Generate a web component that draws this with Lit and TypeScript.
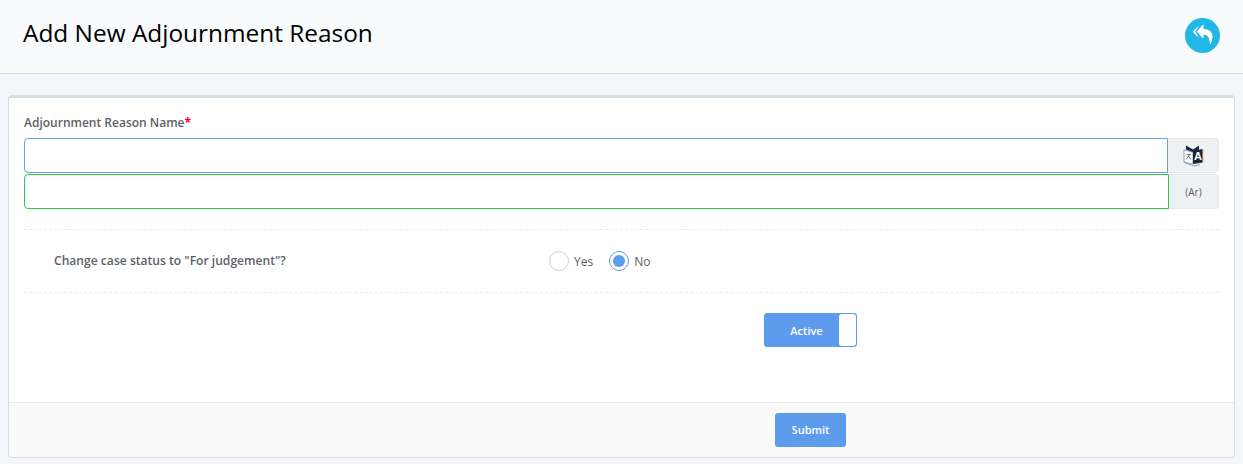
import { LitElement, html, css } from "lit";
import { customElement } from "lit/decorators.js";

@customElement("app-root")
export class AppRoot extends LitElement {
  static styles = css`
    :host { display: block; width: 1243px; height: 464px; background: #f4f6fb; font-family: "Open Sans", "Noto Sans", sans-serif; overflow: hidden; }
    .head { height: 73px; box-sizing: content-box; background: #f9fafc; border-bottom: 1px solid #d3d8de; display: flex; align-items: center; justify-content: space-between; padding: 0 23px; }
    h1 { margin: 0; font-size: 24.4px; font-weight: 400; color: #000; position: relative; top: -4px; line-height: 32px; }
    .back { width: 35px; height: 35px; border-radius: 50%; background: #22b8e6; display: flex; align-items: center; justify-content: center; margin-top: -3px; }
    .card { margin: 21px 8px 0 8px; height: 363px; box-sizing: border-box; background: #fff; border: 1px solid #d5dde4; border-top: 3px solid #d2dde5; border-radius: 4px; display: flex; flex-direction: column; }
    .body { flex: 1; padding: 15px 15px 0 15px; }
    label.title { display: block; font-size: 12px; font-weight: 600; color: #5f5f66; line-height: 20px; margin-bottom: 5px; }
    .star { color: #f0002a; font-weight: 700; }
    .grp { display: flex; height: 35px; }
    .grp + .grp { margin-top: 1px; }
    .inp { flex: 1; box-sizing: border-box; border: 1px solid #6b9fe8; border-radius: 4px 0 0 4px; background: #fff; }
    .inp.ar { border-color: #2ec84a; }
    .addon { box-sizing: border-box; width: 51px; background: #eef1f3; border: 1px solid #e6eaec; border-left: 0; border-radius: 0 4px 4px 0; display: flex; align-items: center; justify-content: center; font-size: 10px; color: #6a5a60; }
    .grp.ar .addon { width: 50px; }
    .sep { border-top: 1px dashed #ececf0; }
    .row { margin-top: 20px; height: 62px; display: flex; align-items: center; padding-left: 30px; }
    .q { width: 495px; font-size: 12.1px; font-weight: 600; color: #5f5f66; position: relative; top: -1px; }
    .radio { display: flex; align-items: center; gap: 5px; font-size: 12px; color: #5e5e66; margin-right: 16px; }
    .dot { width: 20px; height: 20px; box-sizing: border-box; border: 1px solid #cfcfcf; border-radius: 50%; display: flex; align-items: center; justify-content: center; }
    .dot.on { border-color: #5d9cec; }
    .dot.on i { width: 12px; height: 12px; border-radius: 50%; background: #5d9cec; display: block; }
    .sw-row { border-top: 1px dashed #ececf0; display: flex; padding-top: 20px; padding-left: 740px; }
    .sw { width: 93px; height: 34px; box-sizing: border-box; background: #5d9cec; border-radius: 3px; display: flex; align-items: center; color: #fff; font-size: 11px; font-weight: 600; position: relative; }
    .sw span { width: 85px; text-align: center; box-sizing: border-box; }
    .knob { position: absolute; right: 1px; top: 1px; bottom: 1px; width: 17px; background: #fff; border-radius: 3px; }
    .foot { height: 55px; background: #fafafa; border-top: 1px solid #e8e8e8; border-radius: 0 0 4px 4px; display: flex; padding: 10px 0 0 766px; box-sizing: border-box; }
    .btn { width: 71px; height: 34px; background: #5d9cec; border-radius: 3px; color: #fff; border: 0; font: 600 11px "Open Sans", sans-serif; padding: 0 0 2px 0; }
  `;
  render() {
    return html`
      <div class="head">
        <h1>Add New Adjournment Reason</h1>
        <div class="back">
          <svg width="26" height="24" viewBox="0 0 26 24" fill="#fff">
            <path d="M9 2.5 L2.5 8.7 L9 15 L5.4 8.7 Z" />
            <path d="M13 1.5 L6.8 8.7 L13 15.5 L10.5 10 L13.5 11.5 C18 11.5 20 14.5 20 21.5 C24.5 13.5 23 6.5 13.5 6 L10.5 7.5 Z" />
            <path d="M13.5 1.5 L7.8 8.7 L13.5 15.5 V11.5 C18 11.5 20 14.5 20 21.5 C24.5 13.5 23 6.5 13.5 6 Z" />
          </svg>
        </div>
      </div>
      <div class="card">
        <div class="body">
          <label class="title">Adjournment Reason Name<span class="star">*</span></label>
          <div class="grp">
            <div class="inp"></div>
            <div class="addon">
              <svg width="23" height="23" viewBox="0 0 23 23">
                <path d="M2 6 L11 8 V20 L2 18 Z" fill="#fff" stroke="#8fa3b1" stroke-width="1" />
                <path d="M11 7 L21.5 5 V19 L11 20 Z" fill="#f0cf95" />
                <path d="M11 7 L20.5 5 V18.5 L11 20 Z" fill="#17263c" />
                <path d="M4 1.5 L11 5.5 L17 1.5 V6 L11 8 L4 5.5 Z" fill="#17263c" />
                <path d="M2 18 C5 20.5 8 20 12 22 L18 20.5" fill="none" stroke="#8fa3b1" stroke-width="1" />
                <path d="M4 15.5 L8 10 M4.5 10.5 H9 M6.5 12 L8.5 15.5" fill="none" stroke="#666" stroke-width=".9" />
                <text x="12" y="16" font-size="11" font-weight="700" fill="#fff" font-family="Liberation Sans">A</text>
              </svg>
            </div>
          </div>
          <div class="grp ar">
            <div class="inp ar"></div>
            <div class="addon">(Ar)</div>
          </div>
          <div class="row sep">
            <div class="q">Change case status to "For judgement"?</div>
            <div class="radio"><span class="dot"></span>Yes</div>
            <div class="radio"><span class="dot on"><i></i></span>No</div>
          </div>
          <div class="sw-row">
            <div class="sw"><span>Active</span><div class="knob"></div></div>
          </div>
        </div>
        <div class="foot"><button class="btn">Submit</button></div>
      </div>
    `;
  }
}
